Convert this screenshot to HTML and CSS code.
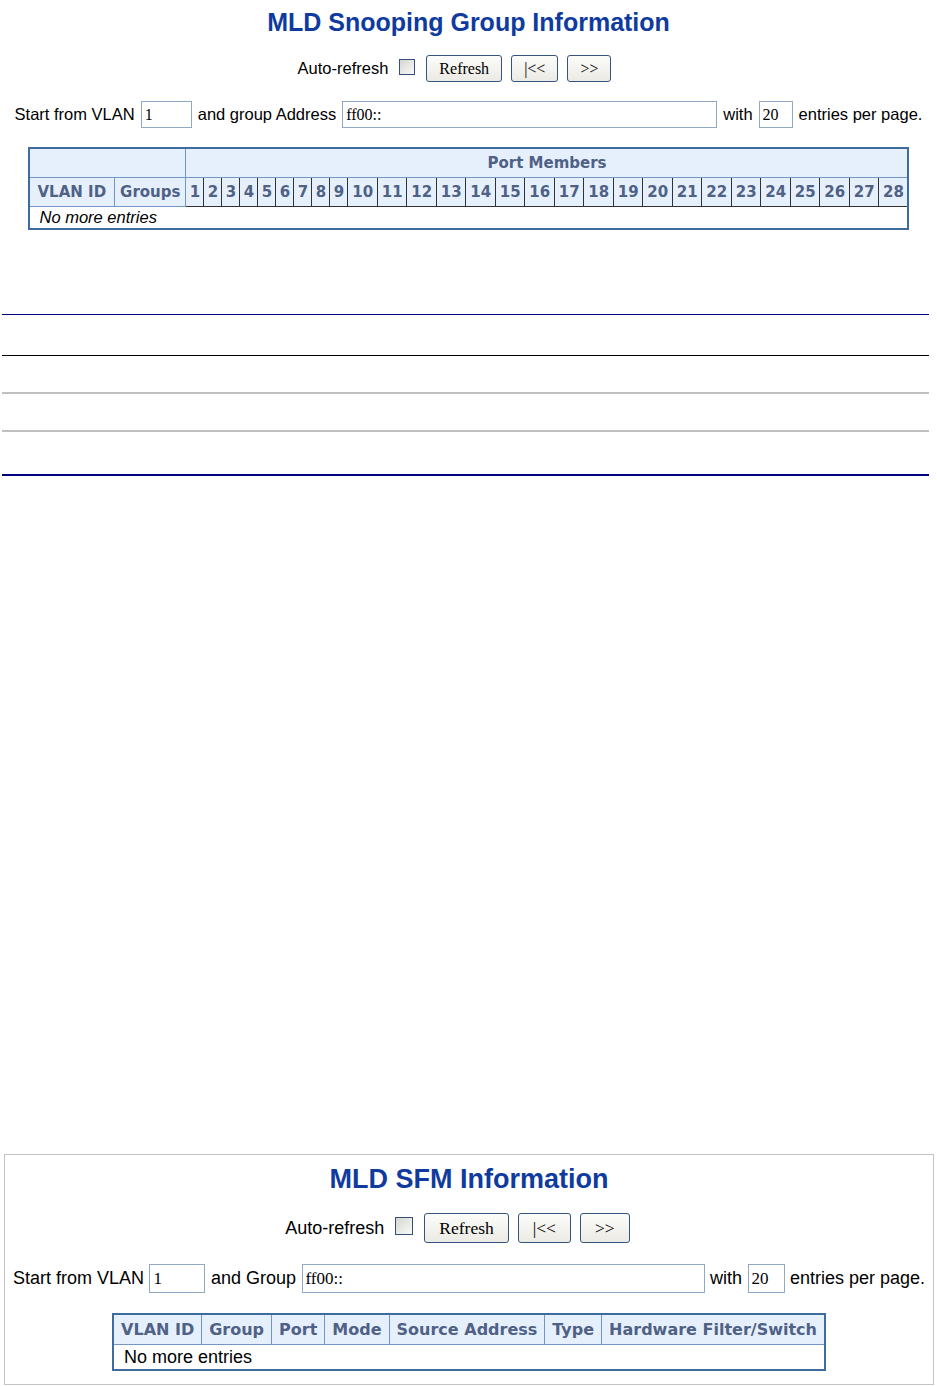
FILE: index.html
```html
<!DOCTYPE html>
<html lang="en">
<head>
  <meta charset="UTF-8"/>
  <title>MLD Snooping Group Information</title>
  <link rel="stylesheet" href="styles.css">
</head>
<body>

  <!-- Group information -->
  <div class="top">
    <h1 class="title">MLD Snooping Group Information</h1>

    <div class="refresh-bar">
      <span>Auto-refresh</span>
      <input type="checkbox" class="check">
      <button class="btn">Refresh</button>
      <button class="btn">|&lt;&lt;</button>
      <button class="btn">&gt;&gt;</button>
    </div>

    <div class="filter-bar">
      <span>Start from VLAN</span>
      <input class="field vlan" value="1">
      <span>and group Address</span>
      <input class="field addr" value="ff00::">
      <span>with</span>
      <input class="field count" value="20">
      <span>entries per page.</span>
    </div>

    <table class="display group-table">
      <thead>
        <tr>
          <th colspan="2"></th>
          <th colspan="28">Port Members</th>
        </tr>
        <tr>
          <th class="vid">VLAN ID</th>
          <th class="groups">Groups</th>
          <th class="port">1</th>
          <th class="port">2</th>
          <th class="port">3</th>
          <th class="port">4</th>
          <th class="port">5</th>
          <th class="port">6</th>
          <th class="port">7</th>
          <th class="port">8</th>
          <th class="port">9</th>
          <th class="port wide">10</th>
          <th class="port wide">11</th>
          <th class="port wide">12</th>
          <th class="port wide">13</th>
          <th class="port wide">14</th>
          <th class="port wide">15</th>
          <th class="port wide">16</th>
          <th class="port wide">17</th>
          <th class="port wide">18</th>
          <th class="port wide">19</th>
          <th class="port wide">20</th>
          <th class="port wide">21</th>
          <th class="port wide">22</th>
          <th class="port wide">23</th>
          <th class="port wide">24</th>
          <th class="port wide">25</th>
          <th class="port wide">26</th>
          <th class="port wide">27</th>
          <th class="port wide">28</th>
        </tr>
      </thead>
      <tbody>
        <tr><td colspan="30" class="empty">No more entries</td></tr>
      </tbody>
    </table>
  </div>

  <!-- Separators -->
  <div class="rules">
    <div class="rule navy"></div>
    <div class="rule black"></div>
    <div class="rule gray"></div>
    <div class="rule gray"></div>
    <div class="rule navy-thick"></div>
  </div>

  <!-- SFM information -->
  <div class="panel">
    <h1 class="title">MLD SFM Information</h1>

    <div class="refresh-bar">
      <span>Auto-refresh</span>
      <input type="checkbox" class="check">
      <button class="btn">Refresh</button>
      <button class="btn">|&lt;&lt;</button>
      <button class="btn">&gt;&gt;</button>
    </div>

    <div class="filter-bar">
      <span>Start from VLAN</span>
      <input class="field vlan" value="1">
      <span>and Group</span>
      <input class="field addr" value="ff00::">
      <span>with</span>
      <input class="field count" value="20">
      <span>entries per page.</span>
    </div>

    <table class="display sfm-table">
      <thead>
        <tr>
          <th>VLAN ID</th>
          <th>Group</th>
          <th>Port</th>
          <th>Mode</th>
          <th>Source Address</th>
          <th>Type</th>
          <th>Hardware Filter/Switch</th>
        </tr>
      </thead>
      <tbody>
        <tr><td colspan="7" class="empty">No more entries</td></tr>
      </tbody>
    </table>
  </div>

</body>
</html>
```

FILE: styles.css
```css
* {
  box-sizing: border-box;
}

body {
  margin: 0;
  background: #fff;
  color: #000;
  font-family: "Liberation Sans", Arial, sans-serif;
}

.top {
  padding-top: 7px;
}

.title {
  margin: 0;
  text-align: center;
  font: bold 25px/30px "Liberation Sans", Arial, sans-serif;
  color: #0f3b9f;
}

/* toolbar rows */
.refresh-bar {
  display: flex;
  justify-content: center;
  align-items: center;
  gap: 9px;
  height: 27px;
  margin-top: 18px;
  padding-right: 28px;
  font-size: 16.5px;
}

.check {
  appearance: none;
  -webkit-appearance: none;
  width: 16px;
  height: 16px;
  margin: 0 2px 0 2px;
  border: 1px solid #34507a;
  background: linear-gradient(135deg, #d6d6d0, #f9f9f7);
  position: relative;
  top: -2px;
}

.btn {
  height: 27px;
  padding: 0 12px;
  border: 1px solid #34557f;
  border-radius: 3px;
  background: linear-gradient(#fcfcfa, #ebeae4);
  font: 16px "Liberation Serif", "Times New Roman", serif;
  color: #000;
}

.filter-bar {
  display: flex;
  justify-content: center;
  align-items: center;
  gap: 6px;
  margin-top: 19px;
  font-size: 16.5px;
}

.field {
  height: 27px;
  padding: 0 3px;
  border: 1px solid #8fa9c6;
  font: 16px "Liberation Serif", "Times New Roman", serif;
  color: #000;
}

.field.vlan { width: 51px; }
.field.addr { width: 375px; }
.field.count { width: 34px; }

/* tables */
.display {
  margin: 19px auto 0;
  border: 2px solid #3f6c9f;
  border-collapse: collapse;
}

.display th {
  padding: 5px 7px;
  background: #e6f0fd;
  border: 1px solid #7396c6;
  color: #4f6185;
  font: bold 15px/18px Verdana, "DejaVu Sans", sans-serif;
  white-space: nowrap;
}

.display th.vid { padding: 5px 8px; }
.display th.groups { padding: 5px 5px; }

.display th.port {
  width: 18px;
  padding: 5px 0;
  border: 1px solid #333;
  border-top-color: #7396c6;
}

.display th.port.wide { width: 29.5px; }

.display td.empty {
  padding: 1px 10px;
  background: #fff;
  font-size: 16.5px;
  line-height: 19px;
  font-style: italic;
  text-align: left;
}

/* separators */
.rules {
  margin: 84px 8px 0 2px;
}

.rule { border-top: 1px solid #000; }
.rule.navy { border-color: #000080; }
.rule.black { margin-top: 40px; }
.rule.gray { margin-top: 36px; border-top: 2px solid #c0c0c0; }
.rule.navy-thick { margin-top: 42px; border-top: 2px solid #000080; }

/* SFM panel */
.panel {
  margin: 678px 3px 0 4px;
  padding: 8px 0 13px;
  border: 1px solid #c4c4c4;
}

.panel .title {
  font-size: 27px;
  line-height: 32px;
}

.panel .refresh-bar {
  height: 30px;
  padding-right: 23px;
  font-size: 18px;
}

.panel .check {
  width: 18px;
  height: 18px;
}

.panel .btn {
  height: 30px;
  padding: 0 14px;
  font-size: 17.5px;
}

.panel .filter-bar {
  gap: 5.5px;
  margin-top: 21px;
  font-size: 18px;
}

.panel .field {
  height: 29px;
  font-size: 17px;
}

.panel .field.vlan { width: 56px; }
.panel .field.addr { width: 403px; }
.panel .field.count { width: 37px; }

.panel .display {
  margin-top: 20px;
}

.panel .display th {
  padding: 5px 7px;
  font-size: 16px;
  line-height: 19px;
}

.panel .display td.empty {
  padding: 2px 10px;
  font-size: 18px;
  line-height: 20px;
  font-style: normal;
}
```
